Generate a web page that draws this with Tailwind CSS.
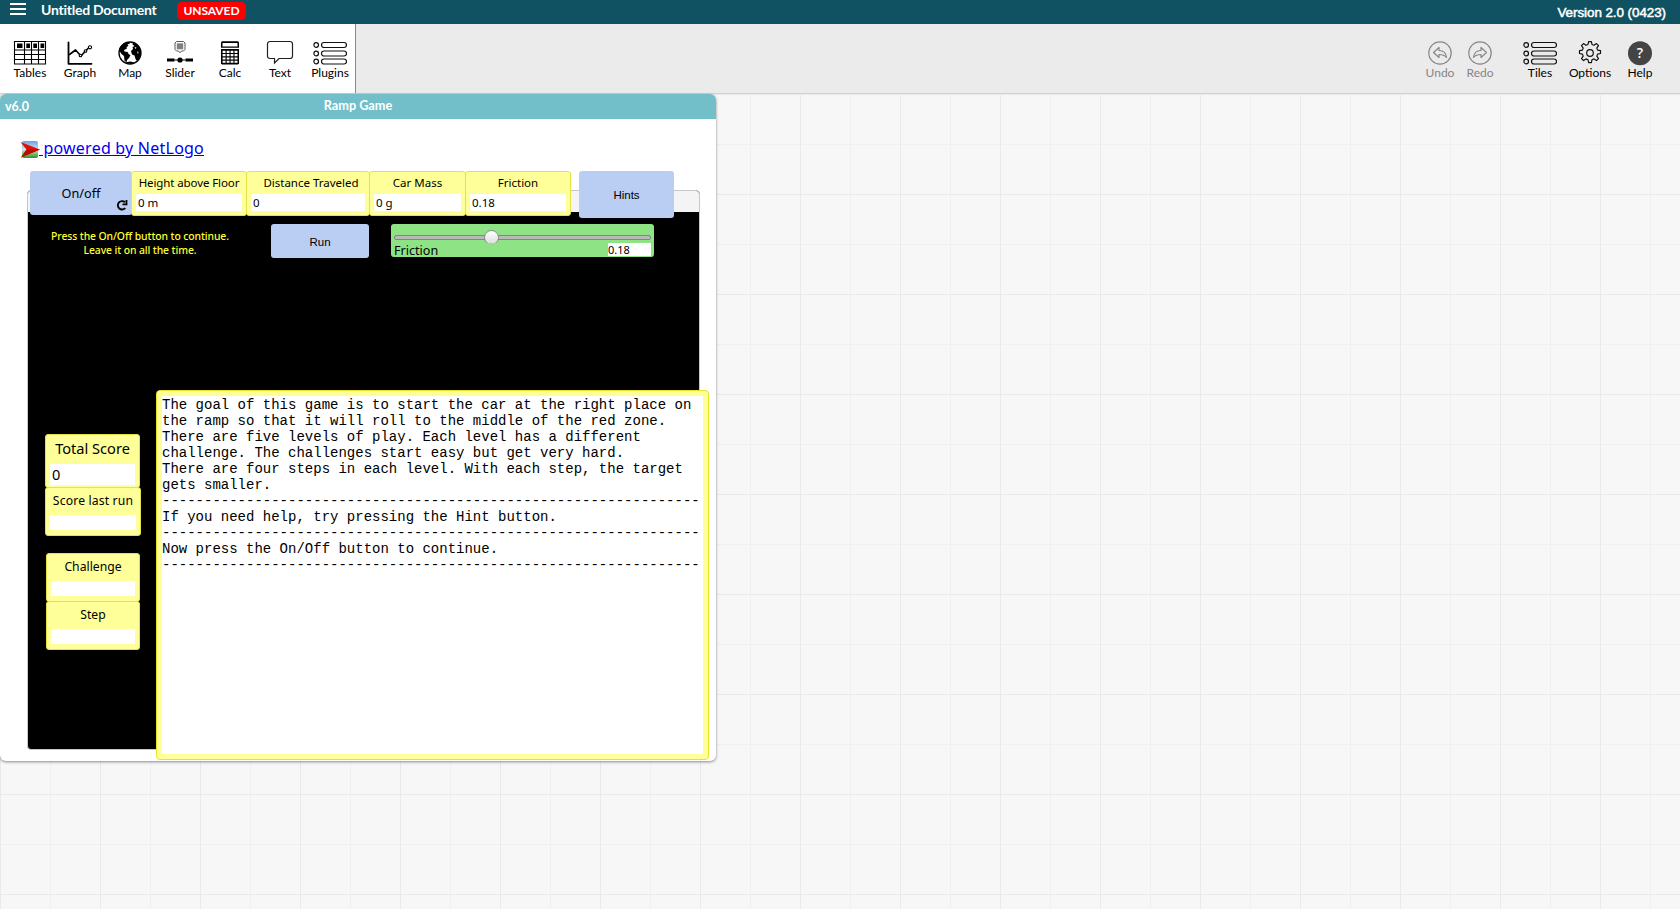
<!DOCTYPE html>
<html lang="en">
<head>
<meta charset="utf-8">
<title>Untitled Document</title>
<script src="https://cdn.jsdelivr.net/npm/@tailwindcss/browser@4"></script>
</head>
<body class="h-screen overflow-hidden flex flex-col bg-[#f7f7f7] font-['Lato',sans-serif] text-black">

<header class="h-6 shrink-0 bg-[#105262] flex items-start text-white">
  <svg class="ml-[10px] mt-[3px] w-4 h-3" viewBox="0 0 16 12"><path d="M0 1h16M0 6h16M0 11h16" stroke="#fff" stroke-width="2"/></svg>
  <span class="ml-[15px] h-[20px] leading-[20px] text-[14px] tracking-[-0.25px] font-bold w-[117px] whitespace-nowrap">Untitled Document</span>
  <span class="ml-[19px] mt-[2px] w-[69px] h-[18px] rounded-[5px] bg-[#ff0000] text-center text-[12px] tracking-[-0.1px] leading-[17px] font-bold">UNSAVED</span>
  <span class="ml-auto mr-[14px] leading-[26px] text-[13.4px] tracking-[-0.05px] font-['Liberation_Sans',sans-serif] [-webkit-text-stroke:0.5px_#fff] whitespace-nowrap">Version 2.0 (0423)</span>
</header>

<nav class="h-[70px] shrink-0 bg-[#ebebeb] border-b border-[#d2d2d2] flex justify-between text-[12px] leading-[14px]">
  <div class="flex bg-white border-r border-[#8a8a8a] w-[356px] pl-[5px] pt-[16px]">
    <div class="w-[50px] flex flex-col items-center">
      <svg class="w-[34px] h-[26px]" viewBox="0 0 34 26" fill="none" stroke="#000"><path d="M1.500 1.500h31v22.500h-31zM1.500 10h31M1.500 14.500h31M1.500 19.500h31M11.500 1.500v22.500M18.500 1.500v22.500M25.500 1.500v22.500" stroke-width="1.100"/><path d="M4 3.500h5.500v4.500h-5.500zM13.300 3.500h3.700v4.500h-3.700zM20.300 3.500h3.700v4.500h-3.700zM27.500 3.500h3.700v4.500h-3.700z" fill="#000" stroke="none"/></svg>
      <span>Tables</span>
    </div>
    <div class="w-[50px] flex flex-col items-center">
      <svg class="w-[26px] h-[26px]" viewBox="0 0 26 26" fill="none" stroke="#000" stroke-linecap="round" stroke-linejoin="round"><path d="M1.500 2.500v21.300h23" stroke-width="1.800"/><path d="M2.500 14.500l6-4.500 5.500 6 5-5.500 3-3" stroke-width="1.600"/><circle cx="23" cy="7.300" r="1.600" stroke-width="1.100" fill="#fff"/><circle cx="13.500" cy="15.500" r="1.300" stroke-width="1.100" fill="#fff"/><circle cx="18.500" cy="11" r="1.300" stroke-width="1.100" fill="#fff"/><circle cx="8.500" cy="10.500" r="1" fill="#000" stroke="none"/></svg>
      <span>Graph</span>
    </div>
    <div class="w-[50px] flex flex-col items-center">
      <svg class="w-[26px] h-[26px]" viewBox="0 0 26 26"><circle cx="13" cy="13" r="11" fill="#fff" stroke="#000" stroke-width="1.300"/><path d="M2.500 8C4.500 4 8 2 12 2l1 1.500-2.500 1 1 1.500-2 1 .5 1.500-3 1.500.5 1.500 3 .5 1.500 2.500 1.500.5-1.500 3-2 2-.5 2.500-2-2-.5-4.500-2.500-2-2-3z"/><path d="M16 2.500l4 2 3 4 1 4-1 5-3 3.500-1.500-2-1-3.500-2.500-1-1-3.500 2-2-.5-2 2-1-2-1.500z"/><path d="M17.500 7l2 .5-1 1.500zM20 11.500l1.500.5-.5 2z" fill="#fff"/><path d="M8 22.500q5 2.500 10 0l-5-1z"/></svg>
      <span>Map</span>
    </div>
    <div class="w-[50px] flex flex-col items-center">
      <svg class="w-[28px] h-[26px]" viewBox="0 0 28 26"><path d="M10.500 1.500h7l1.500 1.500v6.500l-1.500 1.500h-2l-1.500 1.800-1.500-1.800h-2l-1.500-1.500v-6.500z" fill="#fff" stroke="#555"/><path d="M10.800 3.300h6.400v6h-6.400z" fill="#808080"/><path d="M1 20h7.500M19.500 20h7.500" stroke="#000" stroke-width="3"/><path d="M8.500 20h11" stroke="#000" stroke-width="1"/><circle cx="14" cy="20" r="2.600"/></svg>
      <span>Slider</span>
    </div>
    <div class="w-[50px] flex flex-col items-center">
      <svg class="w-[20px] h-[26px]" viewBox="0 0 20 26"><path d="M2 1.300h16l1 1v5.400H1V2.300z"/><path d="M2.500 3h15v3.500h-15z" fill="#fff"/><path d="M1 9h18v14.500l-1 1H2l-1-1z"/><path d="M2.600 10.800h3v2.200h-3zM6.700 10.800h2.800v2.200h-2.800zM10.600 10.800h2.800v2.200h-2.800zM14.500 10.800h3v2.200h-3zM2.600 14.100h3v2.200h-3zM6.700 14.100h2.800v2.200h-2.800zM10.600 14.100h2.800v2.200h-2.800zM14.500 14.100h3v2.200h-3zM2.600 17.400h3v2.200h-3zM6.700 17.400h2.800v2.200h-2.800zM10.600 17.400h2.800v2.200h-2.800zM14.500 17.400h3v2.200h-3zM2.600 20.700h3v2h-3zM6.700 20.700h2.800v2h-2.800zM10.600 20.700h2.800v2h-2.800zM14.500 20.700h3v2h-3z" fill="#fff"/></svg>
      <span>Calc</span>
    </div>
    <div class="w-[50px] flex flex-col items-center">
      <svg class="w-[28px] h-[26px]" viewBox="0 0 28 26"><path d="M4 1.500h20q2.500 0 2.500 2.500v12q0 2.500-2.500 2.500H13L8.500 23v-4.500H4q-2.500 0-2.500-2.500V4q0-2.500 2.500-2.500z" fill="#fff" stroke="#222" stroke-width="1.200"/></svg>
      <span>Text</span>
    </div>
    <div class="w-[50px] flex flex-col items-center">
      <svg class="w-[34px] h-[26px]" viewBox="0 0 34 26" fill="none" stroke="#111" stroke-width="1.200"><circle cx="3.200" cy="5" r="2.300"/><circle cx="3.200" cy="13.500" r="2.300"/><circle cx="3.200" cy="21.500" r="2.300"/><rect x="8.500" y="2.500" width="25" height="5" rx="2.500"/><rect x="8.500" y="11" width="25" height="5" rx="2.500"/><rect x="8.500" y="19" width="25" height="5" rx="2.500"/></svg>
      <span>Plugins</span>
    </div>
  </div>
  <div class="flex pr-[15px] pt-[16px]">
    <div class="w-[40px] flex flex-col items-center text-[#868686]">
      <svg class="w-[26px] h-[26px]" viewBox="0 0 26 26" fill="none" stroke="#868686" stroke-width="1.200" stroke-linejoin="round"><circle cx="13" cy="13" r="11.200"/><path d="M6.500 12.500l5.500-5v3c4 0 7 2 7.500 7-2-2.500-4-3-7.500-3v3z"/></svg>
      <span>Undo</span>
    </div>
    <div class="w-[40px] flex flex-col items-center text-[#868686]">
      <svg class="w-[26px] h-[26px]" viewBox="0 0 26 26" fill="none" stroke="#868686" stroke-width="1.200" stroke-linejoin="round"><circle cx="13" cy="13" r="11.200"/><path d="M19.500 12.500l-5.500-5v3c-4 0-7 2-7.500 7 2-2.500 4-3 7.500-3v3z"/></svg>
      <span>Redo</span>
    </div>
    <div class="ml-[15px] w-[50px] flex flex-col items-center">
      <svg class="w-[34px] h-[26px]" viewBox="0 0 34 26" fill="none" stroke="#111" stroke-width="1.200"><circle cx="3.200" cy="5" r="2.300"/><circle cx="3.200" cy="13.500" r="2.300"/><circle cx="3.200" cy="21.500" r="2.300"/><rect x="8.500" y="2.500" width="25" height="5" rx="2.500"/><rect x="8.500" y="11" width="25" height="5" rx="2.500"/><rect x="8.500" y="19" width="25" height="5" rx="2.500"/></svg>
      <span>Tiles</span>
    </div>
    <div class="w-[50px] flex flex-col items-center">
      <svg class="w-[26px] h-[26px]" viewBox="0 0 26 26" fill="none" stroke="#111" stroke-width="1.200" stroke-linejoin="round"><path d="M11.600 1.600h2.800l.6 2.900 2 .8 2.500-1.700 2 2-1.700 2.500.8 2 2.900.6v2.800l-2.900.6-.8 2 1.700 2.500-2 2-2.500-1.700-2 .8-.6 2.900h-2.800l-.6-2.900-2-.8-2.500 1.700-2-2 1.700-2.500-.8-2-2.900-.6v-2.800l2.900-.6.8-2-1.700-2.500 2-2 2.500 1.700 2-.8z"/><circle cx="13" cy="13" r="3.300"/></svg>
      <span>Options</span>
    </div>
    <div class="w-[50px] flex flex-col items-center">
      <svg class="w-[26px] h-[26px]" viewBox="0 0 26 26"><circle cx="13" cy="13.300" r="12" fill="#444"/><text x="13" y="18.300" text-anchor="middle" font-family="Open Sans, sans-serif" font-size="14" font-weight="600" fill="#fff">?</text></svg>
      <span>Help</span>
    </div>
  </div>
</nav>

<main class="grow relative bg-[linear-gradient(#eaeaea_1px,transparent_1px),linear-gradient(90deg,#eaeaea_1px,transparent_1px),linear-gradient(#f0f0f0_1px,transparent_1px),linear-gradient(90deg,#f0f0f0_1px,transparent_1px)] bg-[size:100px_100px,100px_100px,50px_50px,50px_50px]">
  <section class="w-[716px] h-[667px] rounded-[6px] bg-white overflow-hidden shadow-[0_1px_3px_rgba(0,0,0,0.45)]">
    <div class="h-[25px] bg-[#72bfca] text-white font-bold text-[12.5px] leading-[25px] flex">
      <span class="w-[100px] pl-[5px]">v6.0</span>
      <span class="grow text-center text-[12.7px] leading-[23px]">Ramp Game</span>
      <span class="w-[100px]"></span>
    </div>

    <!-- Widgets sit on the model's free canvas -->
    <div class="relative h-[642px] font-['Noto_Sans',sans-serif] text-[11.5px]">
      <a class="absolute left-[20px] top-[20px] flex text-[#0000ee] text-[16px] leading-[19px] whitespace-pre">
        <svg class="w-5 h-5 mt-[1px] -mr-px" viewBox="0 0 20 20"><defs><linearGradient id="sky" x2="0" y2="1"><stop offset="0" stop-color="#6d9fe8"/><stop offset=".5" stop-color="#cfe4f2"/><stop offset=".65" stop-color="#9bd08a"/><stop offset="1" stop-color="#2f8f30"/></linearGradient></defs><rect x="2" y="1" width="16" height="17" rx="2" fill="url(#sky)"/><path d="M.5 2L20 9.500 1 17.500 6.500 9.500z" fill="#e01205"/><path d="M6.500 9.500H20L1 17.500z" fill="#b80c03"/></svg><span class="underline tracking-[0.23px]"> powered by NetLogo</span></a>

      <div class="absolute left-[27px] top-[71px] w-[673px] h-[560px] rounded-[4px] border border-[#c8c8c8] bg-black overflow-hidden"><div class="h-[21px] bg-[#f4f4f4]"></div></div>

      <button class="absolute left-[30px] top-[52px] w-[102px] h-[44px] rounded-[3px] bg-[#bacef3] text-[12.7px] pt-[2px]">On/off
        <svg class="absolute right-[4px] bottom-[4px] w-[12px] h-[12px]" viewBox="0 0 12 12" fill="none" stroke="#000" stroke-width="1.900"><path d="M9 3.300A4.200 4.200 0 1 0 9.300 9"/><path d="M6.500 5.300H10.500V1" stroke-width="1.800"/></svg>
      </button>

      <div class="absolute left-[131px] top-[52px] w-[116px] h-[45px] rounded-[3px] border border-[#e4e44a] bg-[#ffff99] px-1 flex flex-col"><span class="h-[22px] leading-[22px] text-center whitespace-nowrap tracking-[-0.1px]">Height above Floor</span><span class="h-[17px] leading-[17px] bg-white pl-[2px]">0 m</span></div>
      <div class="absolute left-[246px] top-[52px] w-[124px] h-[45px] rounded-[3px] border border-[#e4e44a] bg-[#ffff99] px-1 flex flex-col"><span class="h-[22px] leading-[22px] text-center pl-[6px] whitespace-nowrap">Distance Traveled</span><span class="h-[17px] leading-[17px] bg-white pl-[2px]">0</span></div>
      <div class="absolute left-[369px] top-[52px] w-[97px] h-[45px] rounded-[3px] border border-[#e4e44a] bg-[#ffff99] px-1 flex flex-col"><span class="h-[22px] leading-[22px] text-center whitespace-nowrap">Car Mass</span><span class="h-[17px] leading-[17px] bg-white pl-[2px]">0 g</span></div>
      <div class="absolute left-[465px] top-[52px] w-[106px] h-[45px] rounded-[3px] border border-[#e4e44a] bg-[#ffff99] px-1 flex flex-col"><span class="h-[22px] leading-[22px] text-center whitespace-nowrap">Friction</span><span class="h-[17px] leading-[17px] bg-white pl-[2px]">0.18</span></div>

      <button class="absolute left-[579px] top-[52px] w-[95px] h-[47px] rounded-[3px] bg-[#bacef3] pt-[2px] text-[11.5px] font-['Liberation_Sans',sans-serif]">Hints</button>
      <button class="absolute left-[271px] top-[105px] w-[98px] h-[34px] rounded-[3px] bg-[#bacef3] pt-[3px] text-[11.5px] font-['Liberation_Sans',sans-serif]">Run</button>

      <p class="absolute left-[40px] top-[111px] w-[200px] text-center text-[#ffff33] text-[10.4px] tracking-[-0.1px] font-medium leading-[13.5px] whitespace-nowrap">Press the On/Off button to continue.<br>Leave it on all the time.</p>

      <div class="absolute left-[391px] top-[105px] w-[263px] h-[33px] rounded-[3px] bg-[#8ee485] px-[3px] pt-[11px] flex flex-col">
        <div class="h-[5px] rounded-[2px] border border-[#7b8b78] bg-[#b9b9b9] shrink-0"></div>
        <div class="flex justify-between pt-[3px]">
          <span class="text-[12.6px] leading-[15px]">Friction</span>
          <span class="w-[43px] h-[13px] leading-[13px] bg-white text-[11px]">0.18</span>
        </div>
        <div class="absolute left-[93px] top-[6px] w-[15px] h-[13px] overflow-hidden"><div class="w-[15px] h-[15px] rounded-full border border-[#8a8a8a] bg-linear-to-b from-white to-[#dcdcdc]"></div></div>
      </div>

      <div class="absolute left-[45px] top-[315px] w-[95px] h-[54px] rounded-[3px] border border-[#e4e44a] bg-[#ffff99] px-1 flex flex-col text-[14.6px]"><span class="h-[29px] leading-[27px] text-center whitespace-nowrap">Total Score</span><span class="h-[21px] leading-[20px] bg-white pl-[2px]">0</span></div>
      <div class="absolute left-[45px] top-[368px] w-[96px] h-[49px] rounded-[3px] border border-[#e4e44a] bg-[#ffff99] px-1 flex flex-col text-[12.2px]"><span class="h-[27px] leading-[25px] text-center whitespace-nowrap tracking-[0.15px]">Score last run</span><span class="h-[15px] bg-white"></span></div>
      <div class="absolute left-[46px] top-[434px] w-[94px] h-[49px] rounded-[3px] border border-[#e4e44a] bg-[#ffff99] px-1 flex flex-col text-[12.2px]"><span class="h-[27px] leading-[25px] text-center whitespace-nowrap">Challenge</span><span class="h-[15px] bg-white"></span></div>
      <div class="absolute left-[46px] top-[482px] w-[94px] h-[49px] rounded-[3px] border border-[#e4e44a] bg-[#ffff99] px-1 flex flex-col text-[12.2px]"><span class="h-[27px] leading-[25px] text-center whitespace-nowrap">Step</span><span class="h-[15px] bg-white"></span></div>

      <div class="absolute left-[156px] top-[271px] w-[553px] h-[370px] rounded-[4px] border border-[#e4e42a] bg-[#ffff99] p-[5px]">
        <pre class="h-full bg-white pt-px font-['Liberation_Mono',monospace] text-[14px] leading-[16px]">The goal of this game is to start the car at the right place on
the ramp so that it will roll to the middle of the red zone.
There are five levels of play. Each level has a different
challenge. The challenges start easy but get very hard.
There are four steps in each level. With each step, the target
gets smaller.
----------------------------------------------------------------
If you need help, try pressing the Hint button.
----------------------------------------------------------------
Now press the On/Off button to continue.
----------------------------------------------------------------</pre>
      </div>
    </div>
  </section>
</main>
</body>
</html>
